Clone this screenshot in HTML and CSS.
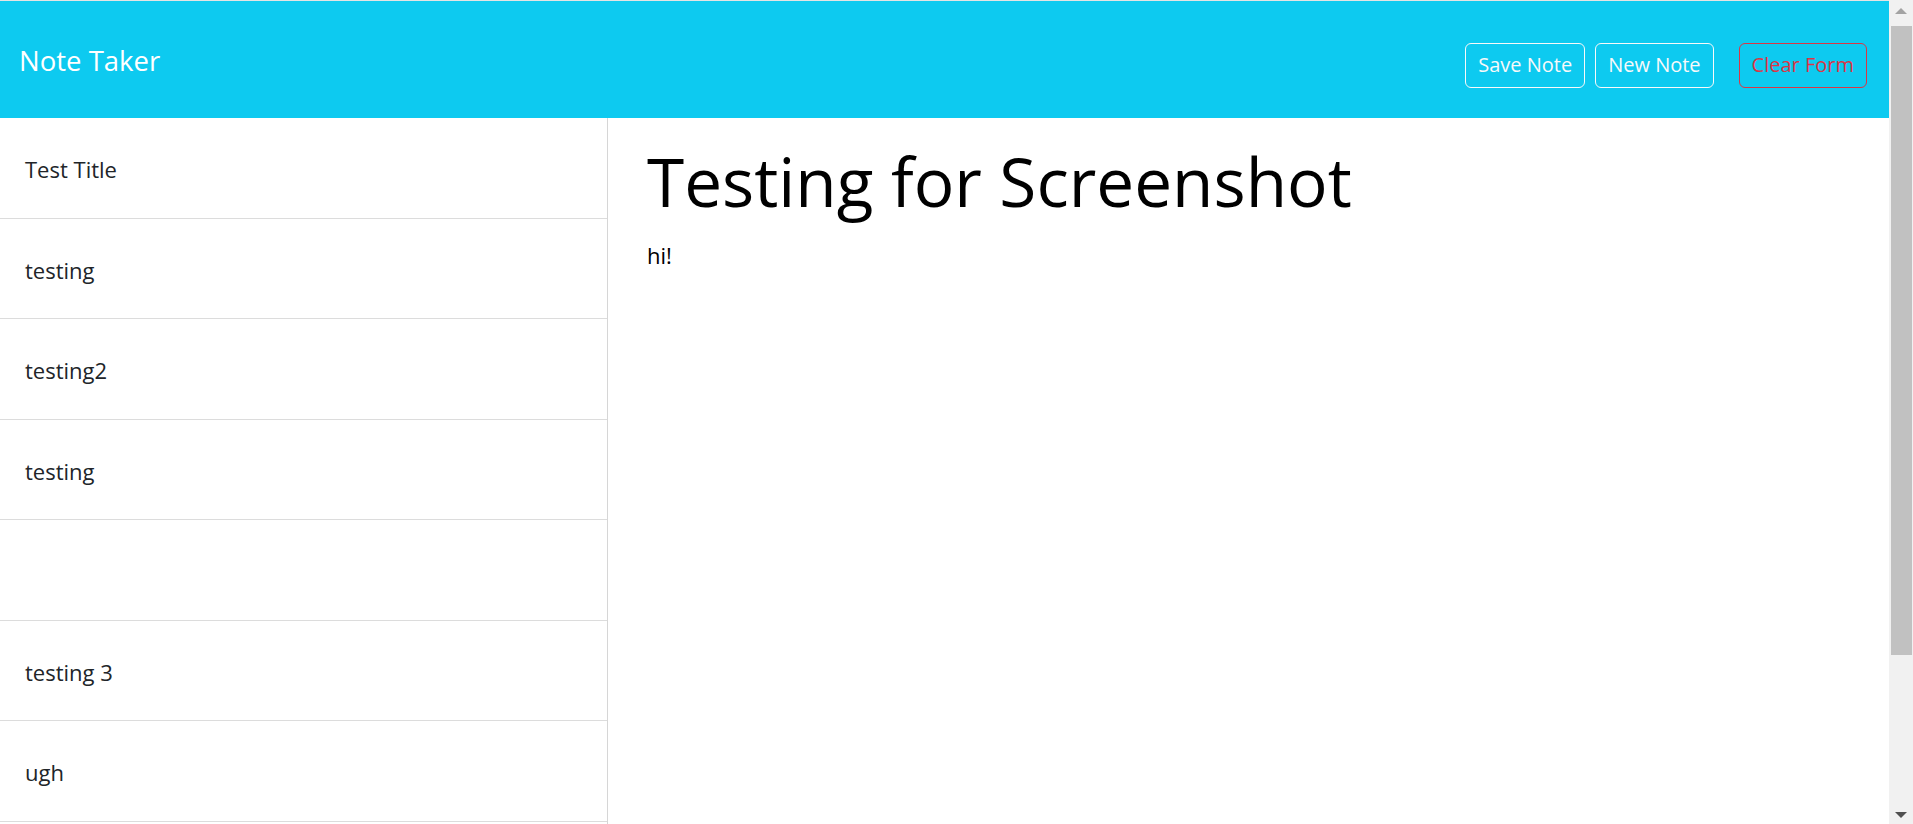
FILE: index.html
```html
<!DOCTYPE html>
<html lang="en">
<head>
<meta charset="utf-8">
<title>Note Taker</title>
<link rel="stylesheet" href="styles.css">
</head>
<body>
<div class="window">
  <div class="page">
    <nav class="navbar">
      <a class="brand" href="#">Note Taker</a>
      <div class="actions">
        <button class="btn btn-light">Save Note</button>
        <button class="btn btn-light">New Note</button>
        <button class="btn btn-danger">Clear Form</button>
      </div>
    </nav>
    <div class="content">
      <aside class="sidebar">
        <ul class="list">
          <li class="item">Test Title</li>
          <li class="item">testing</li>
          <li class="item">testing2</li>
          <li class="item">testing</li>
          <li class="item"></li>
          <li class="item">testing 3</li>
          <li class="item">ugh</li>
          <li class="item"></li>
          <li class="item"></li>
        </ul>
      </aside>
      <main class="editor">
        <div class="note-title">Testing for Screenshot</div>
        <div class="note-text">hi!</div>
      </main>
    </div>
  </div>
  <div class="scrollbar">
    <div class="arrow arrow-up"></div>
    <div class="track">
      <div class="thumb"></div>
    </div>
    <div class="arrow arrow-down"></div>
  </div>
</div>
</body>
</html>
```

FILE: styles.css
```css
html, body {
  margin: 0;
  padding: 0;
  height: 100%;
  overflow: hidden;
  background: #fff;
}

body {
  font-family: "Open Sans", "Noto Sans", "Liberation Sans", sans-serif;
  color: #212529;
}

.window {
  display: flex;
  height: 824px;
}

.page {
  flex: 1;
  display: flex;
  flex-direction: column;
  min-width: 0;
}

.navbar {
  box-sizing: border-box;
  height: 118px;
  border-top: 1px solid #e4e4e4;
  background: #0dcaf0;
  display: flex;
  align-items: center;
  padding: 0 22px 0 19px;
  flex-shrink: 0;
}

.brand {
  color: #fff;
  text-decoration: none;
  font-size: 27.5px;
  line-height: 1;
  margin-top: 2px;
}

.actions {
  margin-left: auto;
  display: flex;
  align-items: center;
  gap: 10px;
  padding-top: 11px;
}

.btn {
  box-sizing: border-box;
  height: 45px;
  padding: 0 12px;
  border-radius: 6px;
  background: transparent;
  font-family: inherit;
  font-size: 20px;
  line-height: 1;
  cursor: pointer;
}

.btn-light {
  border: 1px solid #f8f9fa;
  color: #f8f9fa;
}

.btn-danger {
  border: 1px solid #dc3545;
  color: #dc3545;
  margin-left: 15px;
}

.content {
  flex: 1;
  display: flex;
  min-height: 0;
}

.sidebar {
  box-sizing: border-box;
  width: 608px;
  border-right: 1px solid #d6d6d6;
  flex-shrink: 0;
}

.list {
  list-style: none;
  margin: 0;
  padding: 0;
}

.item {
  box-sizing: border-box;
  height: 100.5px;
  border-bottom: 1px solid #dcdcdc;
  display: flex;
  align-items: center;
  padding: 3px 0 0 25px;
  font-size: 22px;
  color: #212529;
}

.editor {
  flex: 1;
  padding: 0 40px 0 39px;
}

.note-title {
  font-size: 67.5px;
  font-weight: 400;
  color: #000;
  line-height: 1;
  margin-top: 30px;
}

.note-text {
  font-size: 22px;
  color: #000;
  margin-top: 24px;
}

.scrollbar {
  width: 24px;
  flex-shrink: 0;
  background: #f1f1f1;
  display: flex;
  flex-direction: column;
}

.arrow {
  height: 24px;
  display: flex;
  align-items: center;
  justify-content: center;
}

.arrow-up::before {
  content: "";
  border-left: 6px solid transparent;
  border-right: 6px solid transparent;
  border-bottom: 6px solid #a3a3a3;
  margin-top: -2px;
}

.arrow-down::before {
  content: "";
  border-left: 6px solid transparent;
  border-right: 6px solid transparent;
  border-top: 6px solid #505050;
  margin-top: 6px;
}

.track {
  flex: 1;
  padding: 2px 1px 0 2px;
}

.thumb {
  height: 629px;
  background: #c1c1c1;
}
```
